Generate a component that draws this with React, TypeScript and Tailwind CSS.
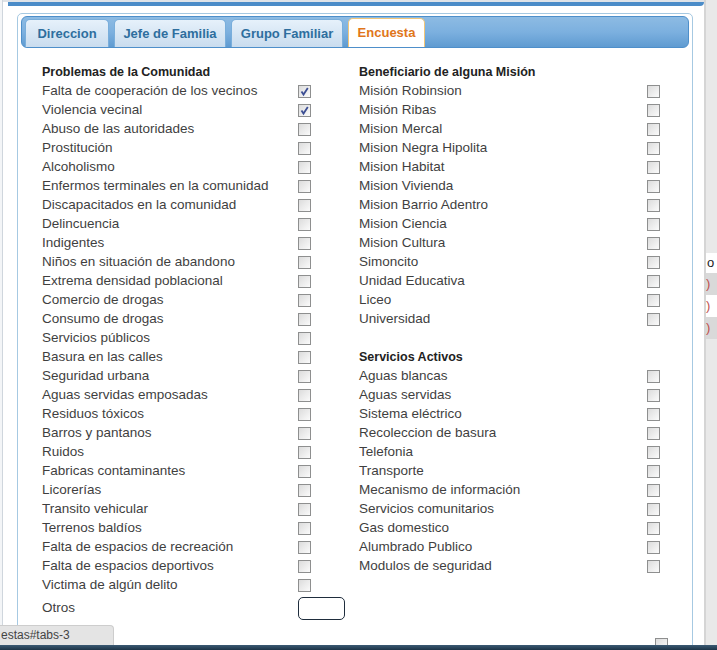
import React from 'react';

const problemas: [string, boolean][] = [
  ['Falta de cooperación de los vecinos', true],
  ['Violencia vecinal', true],
  ['Abuso de las autoridades', false],
  ['Prostitución', false],
  ['Alcoholismo', false],
  ['Enfermos terminales en la comunidad', false],
  ['Discapacitados en la comunidad', false],
  ['Delincuencia', false],
  ['Indigentes', false],
  ['Niños en situación de abandono', false],
  ['Extrema densidad poblacional', false],
  ['Comercio de drogas', false],
  ['Consumo de drogas', false],
  ['Servicios públicos', false],
  ['Basura en las calles', false],
  ['Seguridad urbana', false],
  ['Aguas servidas emposadas', false],
  ['Residuos tóxicos', false],
  ['Barros y pantanos', false],
  ['Ruidos', false],
  ['Fabricas contaminantes', false],
  ['Licorerías', false],
  ['Transito vehicular', false],
  ['Terrenos baldíos', false],
  ['Falta de espacios de recreación', false],
  ['Falta de espacios deportivos', false],
  ['Victima de algún delito', false],
];

const misiones = [
  'Misión Robinsion',
  'Misión Ribas',
  'Mision Mercal',
  'Mision Negra Hipolita',
  'Mision Habitat',
  'Mision Vivienda',
  'Mision Barrio Adentro',
  'Mision Ciencia',
  'Mision Cultura',
  'Simoncito',
  'Unidad Educativa',
  'Liceo',
  'Universidad',
];

const servicios = [
  'Aguas blancas',
  'Aguas servidas',
  'Sistema eléctrico',
  'Recoleccion de basura',
  'Telefonia',
  'Transporte',
  'Mecanismo de información',
  'Servicios comunitarios',
  'Gas domestico',
  'Alumbrado Publico',
  'Modulos de seguridad',
];

function Check({ checked = false }: { checked?: boolean }) {
  return (
    <span className="relative inline-block w-[13px] h-[13px] border border-[#8e8f8f] bg-gradient-to-br from-[#dcdcdc] to-[#fbfbfb]">
      {checked && (
        <svg viewBox="0 0 11 11" className="absolute inset-0 w-[11px] h-[11px]">
          <path d="M2.5 5.5 L4.5 8.5 L8.8 2" fill="none" stroke="#3d4f94" strokeWidth="1.8" />
        </svg>
      )}
    </span>
  );
}

function Row({ label, checked, wide }: { label: string; checked?: boolean; wide?: boolean }) {
  return (
    <div className="flex items-center h-[19px]">
      <span className={`${wide ? 'w-[288px]' : 'w-[256px]'} text-[13.5px] text-[#3f3f3f] whitespace-nowrap`}>{label}</span>
      <Check checked={checked} />
    </div>
  );
}

const tabs = [
  { name: 'Direccion', w: 'w-[84px]' },
  { name: 'Jefe de Familia', w: 'w-[112px]' },
  { name: 'Grupo Familiar', w: 'w-[112px]' },
];

export default function App() {
  return (
    <div
      className="relative h-[650px] w-[717px] overflow-hidden flex bg-[#e9e9e9]"
      style={{ fontFamily: '"Liberation Sans", Arial, sans-serif' }}
    >
      {/* left page sliver */}
      <div className="w-[3px] shrink-0 bg-[#f3f5f7] border-r border-[#cfd6dd]" />

      {/* dialog */}
      <div className="w-[703px] shrink-0 bg-white flex flex-col border-r-2 border-[#d5d5d5]">
        <div className="h-[2px] shrink-0 bg-[#dfe3e8]" />
        <div className="ml-[5px] h-[4px] shrink-0 bg-[#4b8cc8] rounded-br-[4px]" />

        <div className="mt-[7px] ml-[14px] w-[676px] shrink-0 flex-1 border border-[#a6c9e2] rounded-t-[5px] pt-[2px] px-[3px]">
          {/* tab nav */}
          <div className="h-[32px] rounded-[6px] border border-[#4e8fca] bg-gradient-to-b from-[#8dbbe3] via-[#7cb0df] to-[#5f9bd1] flex items-end gap-[5px] pl-[3px]">
            {tabs.map((t) => (
              <div
                key={t.name}
                className={`${t.w} h-[28px] rounded-t-[5px] border border-b-0 border-[#79aedb] bg-gradient-to-b from-[#e6f1fb] to-[#c9dcee] flex items-center justify-center text-[13px] font-bold text-[#2e6e9e]`}
              >
                {t.name}
              </div>
            ))}
            <div className="w-[77px] h-[29px] rounded-t-[5px] border border-b-0 border-[#f2c679] bg-white flex items-center justify-center text-[13px] font-bold text-[#e0761a]">
              Encuesta
            </div>
          </div>

          {/* content */}
          <div className="pt-[15px] pl-[21px] flex">
            <div className="w-[317px]">
              <div className="h-[19px] flex items-center text-[12.5px] font-bold text-[#222]">Problemas de la Comunidad</div>
              {problemas.map(([l, c]) => (
                <Row key={l} label={l} checked={c} />
              ))}
              <div className="flex items-center h-[25px] mt-[1px]">
                <span className="w-[256px] text-[13.5px] text-[#3f3f3f]">Otros</span>
                <span className="w-[47px] h-[23px] rounded-[5px] border border-[#1f2d3d]" />
              </div>
              <div className="flex items-center h-[19px] mt-[20px]">
                <span className="text-[13.5px] text-[#3f3f3f] whitespace-nowrap">
                  ¿Algún miembro del grupo familiar ha sido víctima de algún delito?
                </span>
              </div>
            </div>
            <div>
              <div className="h-[19px] flex items-center text-[12.5px] font-bold text-[#222]">Beneficiario de alguna Misión</div>
              {misiones.map((l) => (
                <Row key={l} label={l} wide />
              ))}
              <div className="h-[19px]" />
              <div className="h-[19px] flex items-center text-[12.5px] font-bold text-[#222]">Servicios Activos</div>
              {servicios.map((l) => (
                <Row key={l} label={l} wide />
              ))}
              <div className="h-[59px]" />
              <div className="flex items-center h-[19px]">
                <span className="w-[296px]" />
                <Check />
              </div>
            </div>
          </div>
        </div>
      </div>

      {/* page behind on the right */}
      <div className="flex-1 flex flex-col pt-[253px] text-[13px]">
        <div className="h-[20px] bg-white pl-[1px] text-[#222] leading-[20px]">o</div>
        <div className="h-[22px] bg-[#d9d9d9] text-[#c0504d] leading-[22px]">)</div>
        <div className="h-[22px] bg-white text-[#c0504d] leading-[22px]">)</div>
        <div className="h-[22px] bg-[#d9d9d9] text-[#c0504d] leading-[22px]">)</div>
      </div>

      {/* status bar link preview */}
      <div className="absolute left-0 bottom-[5px] w-[114px] h-[20px] bg-[#e4e4e4] border-t border-r border-[#cdcdcd] rounded-tr-[4px] text-[12px] text-[#444] pl-[1px] leading-[19px]">
        estas#tabs-3
      </div>

      {/* bottom taskbar */}
      <div className="absolute left-0 right-0 bottom-0 h-[5px] bg-gradient-to-b from-[#3b5a74] to-[#1d3447]" />
    </div>
  );
}
